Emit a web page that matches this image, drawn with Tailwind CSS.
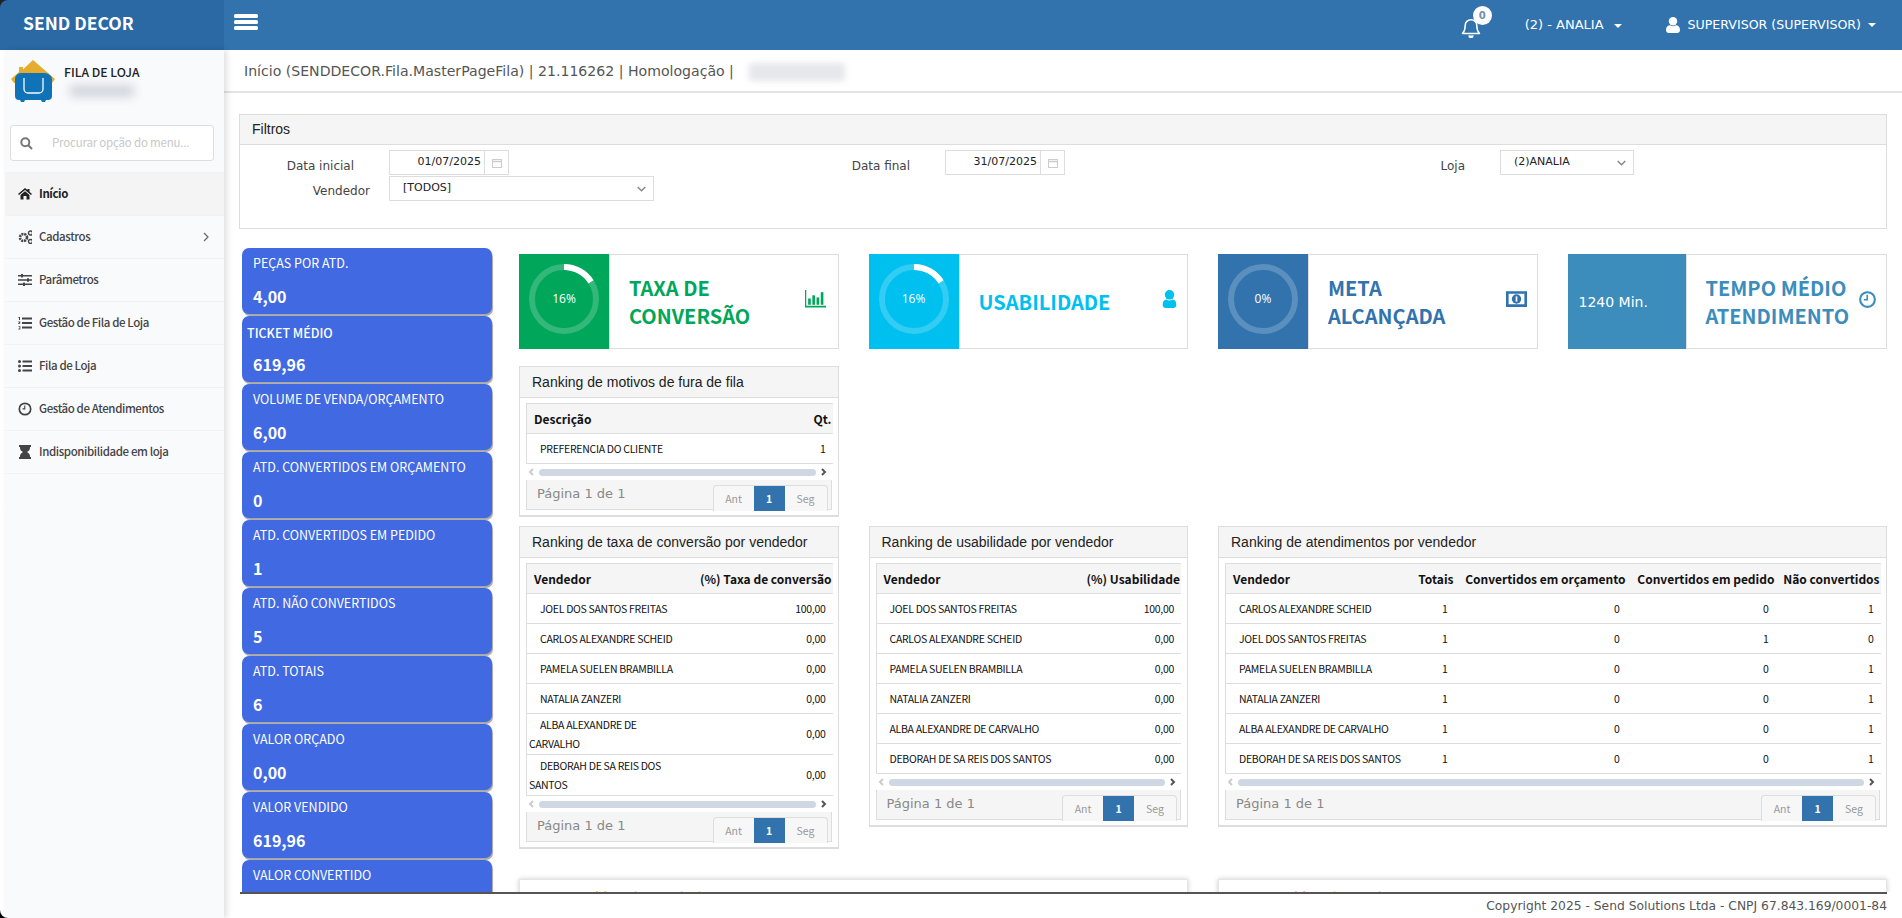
<!DOCTYPE html><html lang="pt-BR">
<head>
  <meta charset="UTF-8">
  <title>Send Decor - Fila de Loja</title>
  <script src="https://cdn.jsdelivr.net/npm/@tailwindcss/browser@4"></script>
</head>
<body class="bg-white h-screen overflow-hidden font-['Noto_Sans_CJK_SC',sans-serif]">

  <!-- barra superior -->
  <header class="h-[50px] bg-[#3273ae] flex items-center text-white relative">
    <div class="w-[224px] h-full bg-[#222] shrink-0">
      <div class="w-full h-full bg-[#2a69a4] flex items-center pl-[23px] pb-[4px] text-[17.5px] font-semibold rounded-tl-[8px]">SEND DECOR</div>
    </div>
    <svg class="ml-[10px] -mt-[6px] w-[24px] h-[16px]" viewBox="0 0 24 16" fill="white"><rect y="0" width="24" height="4" rx="1.5"/><rect y="6" width="24" height="4" rx="1.5"/><rect y="12" width="24" height="4" rx="1.5"/></svg>
    <div class="ml-auto flex items-center font-['DejaVu_Sans',sans-serif] text-[13px] relative h-full">
      <div class="relative w-[20px] h-[22px] mt-[3px]">
        <svg class="w-[20px] h-[22px]" viewBox="0 0 20 22" fill="none" stroke="white" stroke-width="1.5"><path d="M1.5 17.5c2-2 2.7-3.5 2.7-8 0-3.2 2.5-5.8 5.8-5.800s5.800 2.600 5.800 5.800c0 4.500.7 6 2.700 8z" stroke-linejoin="round"/><path d="M8 19.500a2 2 0 0 0 4 0" fill="white"/></svg>
        <span class="absolute -top-[10px] left-[12px] w-[19px] h-[19px] rounded-full bg-white text-[#6f8fb0] text-[10px] font-bold flex items-center justify-center">0</span>
      </div>
      <span class="ml-[44px]">(2) - ANALIA</span>
      <span class="ml-[10px] mt-[2px] border-x-[4px] border-x-transparent border-t-[4px] border-t-white"></span>
      <svg class="ml-[44px] w-[14px] h-[16px]" viewBox="0 0 14 16" fill="white"><circle cx="7" cy="4.200" r="4.200"/><path d="M0 13c0-3 1.800-4.800 4-4.800 1 .7 2 1 3 1s2-.3 3-1c2.200 0 4 1.800 4 4.800 0 1.800-1.300 3-3 3H3c-1.700 0-3-1.200-3-3z"/></svg>
      <span class="ml-[8px] text-[12.6px]">SUPERVISOR (SUPERVISOR)</span>
      <span class="ml-[7px] mr-[26px] border-x-[4px] border-x-transparent border-t-[4px] border-t-white"></span>
    </div>
  </header>

  <div class="flex h-[868px] relative">
    <!-- menu lateral -->
    <aside class="w-[224px] shrink-0 h-full pl-[5px] bg-linear-to-r from-white to-[#e4e4e4]">
      <div class="h-full bg-[#f9fafc] shadow-[3px_0_6px_rgba(0,0,0,0.12)] relative">
        <div class="h-[75px] flex items-start pl-[6px] pt-[10px]">
          <svg class="w-[44px] h-[44px] shrink-0" viewBox="0 0 44 44">
            <path d="M22 0 44 19l-3 4H3l-3-4 8-7V7h4v2.500z" fill="#e6ac2b"/>
            <path d="M10 13h24c3 0 7 3 7 6v17c0 3-2 4-4 4h-2l-1 2h-3l-1-2H14l-1 2h-3l-1-2H8c-2 0-4-1-4-4V19c0-3 3-6 6-6z" fill="#1173b7"/>
            <path d="M13 18v11a4 4 0 0 0 4 4h11a4 4 0 0 0 4-4V18" fill="none" stroke="#f9fafc" stroke-width="1.300"/>
          </svg>
          <div class="ml-[9px] pt-[3px]">
            <div class="text-[12.2px] leading-[18px] font-medium text-[#222]">FILA DE LOJA</div>
            <div class="mt-[4px] w-[64px] h-[12px] bg-gray-300 blur-[5px] ml-[6px]"></div>
          </div>
        </div>
        <div class="mx-[5px] w-[204px] h-[36px] border border-[#ddd] rounded-[3px] bg-white flex items-center pl-[9px]">
          <svg class="w-[13px] h-[13px] shrink-0" viewBox="0 0 13 13" fill="none" stroke="#777" stroke-width="2"><circle cx="5.300" cy="5.300" r="4"/><path d="M8.300 8.300 12 12"/></svg>
          <span class="ml-[19px] text-[11.5px] tracking-[-0.2px] whitespace-nowrap text-[#c8c8c8]">Procurar opção do menu...</span>
        </div>
        <nav id="menu" class="mt-[11px] border-t border-[#f1f2f4] text-[11.5px] tracking-[-0.4px] font-medium text-[#444]"></nav>
      </div>
    </aside>
    <div class="absolute left-0 bottom-0 w-[8px] h-[8px] bg-black"><div class="h-full bg-[#f9fafc] rounded-bl-[8px]"></div></div>

    <main class="flex-1 min-w-0 flex flex-col">
      <div class="h-[43px] shrink-0 border-b-2 border-[#e3e3e3] flex items-center pl-[20px] pt-[3px] font-['DejaVu_Sans',sans-serif] text-[14.1px] text-[#555]">
        Início (SENDDECOR.Fila.MasterPageFila) | 21.116262 | Homologação |
        <span class="ml-[15px] w-[96px] h-[18px] bg-gray-200 blur-[3px]"></span>
      </div>

      <div class="flex-1 min-h-0 overflow-hidden pt-[21px] pl-[15px] pr-[15px]">
        <!-- filtros -->
        <section class="h-[115px] border border-[#ddd]">
          <div class="h-[30px] bg-[#f5f5f5] border-b border-[#ddd] pl-[12px] flex items-center font-['Liberation_Sans',sans-serif] text-[14px] text-[#222]">Filtros</div>
          <div class="relative font-['DejaVu_Sans',sans-serif] text-[#444] text-[12px]">
            <div class="flex items-start pt-[5px]">
              <label class="w-[114px] text-right pt-[7px]">Data inicial</label>
              <div class="ml-[35px] w-[120px] h-[25px] border border-[#ddd] flex text-[11px] text-[#222]">
                <span class="flex-1 flex items-center justify-end pr-[3px]">01/07/2025</span>
                <span class="w-[24px] border-l border-[#ddd] flex items-center justify-center"><svg class="w-[10px] h-[10px]" viewBox="0 0 10 10" fill="none" stroke="#ccc"><rect x=".5" y="1.500" width="9" height="8"/><path d="M.5 3.500h9" stroke-width="1.500"/></svg></span>
              </div>
              <label class="w-[70px] ml-[331px] text-right pt-[7px]">Data final</label>
              <div class="ml-[35px] w-[120px] h-[25px] border border-[#ddd] flex text-[11px] text-[#222]">
                <span class="flex-1 flex items-center justify-end pr-[3px]">31/07/2025</span>
                <span class="w-[24px] border-l border-[#ddd] flex items-center justify-center"><svg class="w-[10px] h-[10px]" viewBox="0 0 10 10" fill="none" stroke="#ccc"><rect x=".5" y="1.500" width="9" height="8"/><path d="M.5 3.500h9" stroke-width="1.500"/></svg></span>
              </div>
              <label class="w-[30px] ml-[370px] text-right pt-[7px]">Loja</label>
              <div class="ml-[35px] w-[134px] h-[25px] border border-[#ddd] flex items-center pl-[13px] pr-[7px] justify-between text-[11px] text-[#222]">
                <span>(2)ANALIA</span>
                <svg class="w-[9px] h-[6px]" viewBox="0 0 9 6" fill="none" stroke="#888" stroke-width="1.500"><path d="M.7 1 4.500 4.800 8.300 1"/></svg>
              </div>
            </div>
            <div class="flex items-start mt-[1px]">
              <label class="w-[130px] text-right pt-[6px]">Vendedor</label>
              <div class="ml-[19px] w-[265px] h-[25px] border border-[#ddd] flex items-center pl-[13px] pr-[7px] justify-between text-[11px] text-[#222]">
                <span>[TODOS]</span>
                <svg class="w-[9px] h-[6px]" viewBox="0 0 9 6" fill="none" stroke="#888" stroke-width="1.500"><path d="M.7 1 4.500 4.800 8.300 1"/></svg>
              </div>
            </div>
          </div>
        </section>

        <div class="flex mt-[19px] pl-[3px]">
          <!-- indicadores -->
          <div id="stats" class="w-[250px] shrink-0 flex flex-col gap-[2px]"></div>

          <div class="ml-[27px] flex-1 min-w-0">
            <div id="kpis" class="grid grid-cols-4 gap-x-[30px] mt-[6px]"></div>
            <div class="grid grid-cols-4 gap-x-[30px] mt-[17px]"><div id="pMotivos"></div></div>
            <div class="grid grid-cols-4 gap-x-[30px] items-start mt-[9px]">
              <div id="pTaxa"></div>
              <div id="pUso"></div>
              <div id="pAtend" class="col-span-2"></div>
            </div>
            <div class="grid grid-cols-4 gap-x-[30px] mt-[30px]">
              <div class="col-span-2 h-[60px] border border-[#e5e5e5] shadow-[0_0_5px_rgba(0,0,0,0.2)] pl-[48px] pt-[7px] text-[15px] text-[#f39c12]">Ranking de vendedores</div>
              <div class="col-span-2 h-[60px] border border-[#e5e5e5] shadow-[0_0_5px_rgba(0,0,0,0.2)] pl-[48px] pt-[7px] text-[15px] text-[#f39c12]">Ranking de produtos</div>
            </div>
          </div>
        </div>
      </div>

      <footer class="h-[26px] shrink-0 mr-[15px] ml-[16px] border-t-2 border-[#555] bg-white flex items-center justify-end font-['DejaVu_Sans',sans-serif] text-[12.3px] text-[#555]">Copyright 2025 - Send Solutions Ltda - CNPJ 67.843.169/0001-84</footer>
    </main>
  </div>

  <script>
    const ICONS = {
      home: '<path d="M7 1 0 7l1 1 6-5 6 5 1-1-2.500-2.200V2h-2v1.100z"/><path d="M2.500 8 7 4.200 11.500 8v4.500h-3V9h-3v3.500h-3z"/>',
      cogs: '<circle cx="5.500" cy="7.500" r="3.500" fill="none" stroke="currentColor" stroke-width="2.600" stroke-dasharray="2 .8"/><circle cx="12.500" cy="3" r="2" fill="none" stroke="currentColor" stroke-width="1.400"/><circle cx="12.500" cy="11.500" r="2" fill="none" stroke="currentColor" stroke-width="1.400"/>',
      sliders: '<path d="M0 2h14v1.400H0zM0 6.300h14v1.400H0zM0 10.600h14V12H0z"/><rect x="3" y="1" width="2" height="3.400"/><rect x="9" y="5.300" width="2" height="3.400"/><rect x="5" y="9.600" width="2" height="3.400"/>',
      listol: '<path d="M4 1.500h10v2H4zM4 6h10v2H4zM4 10.500h10v2H4z"/><path d="M.5 1h1.500v3H1V2H.5zM.3 5.500h2v1l-1 1h1V8H.3V7l1-1h-1zM.3 10h2v3.500h-2V13h1.200v-.6h-1V12h1v-1.500H.3z"/>',
      listul: '<circle cx="1.500" cy="2.500" r="1.500"/><circle cx="1.500" cy="7" r="1.500"/><circle cx="1.500" cy="11.500" r="1.500"/><path d="M4.500 1.500H14v2H4.500zM4.500 6H14v2H4.500zM4.500 10.500H14v2H4.500z"/>',
      clock: '<circle cx="7" cy="7" r="5.700" fill="none" stroke="currentColor" stroke-width="1.700"/><path d="M7.300 3.500v4H4.500v-1.200h1.700V3.500z"/>',
      hourglass: '<path d="M1 0h12v2h-1v1c0 2-1.500 3-3 4 1.500 1 3 2 3 4v1h1v2H1v-2h1v-1c0-2 1.500-3 3-4-1.500-1-3-2-3-4V2H1z"/>'
    };

    const menuItems = [
      ['home', 'Início', true], ['cogs', 'Cadastros'], ['sliders', 'Parâmetros'], ['listol', 'Gestão de Fila de Loja'],
      ['listul', 'Fila de Loja'], ['clock', 'Gestão de Atendimentos'], ['hourglass', 'Indisponibilidade em loja']
    ];
    document.getElementById('menu').innerHTML = menuItems.map(([icon, label, active]) => `
      <div class="h-[43px] border-b border-[#f1f2f4] flex items-center pl-[13px] pr-[15px] ${active ? 'bg-[#f4f4f5] text-[#222] font-semibold' : ''}">
        <svg class="w-[14px] h-[14px] shrink-0" viewBox="0 0 14 14" fill="currentColor">${ICONS[icon]}</svg>
        <span class="ml-[7px] flex-1">${label}</span>
        ${label === 'Cadastros' ? '<svg class="w-[6px] h-[10px]" viewBox="0 0 6 10" fill="none" stroke="#666" stroke-width="1.200"><path d="M1 1l4 4-4 4"/></svg>' : ''}
      </div>`).join('');

    const stats = [
      ['PEÇAS POR ATD.', '4,00'], ['TICKET MÉDIO', '619,96'], ['VOLUME DE VENDA/ORÇAMENTO', '6,00'],
      ['ATD. CONVERTIDOS EM ORÇAMENTO', '0'], ['ATD. CONVERTIDOS EM PEDIDO', '1'], ['ATD. NÃO CONVERTIDOS', '5'],
      ['ATD. TOTAIS', '6'], ['VALOR ORÇADO', '0,00'], ['VALOR VENDIDO', '619,96'], ['VALOR CONVERTIDO', '0,00']
    ];
    document.getElementById('stats').innerHTML = stats.map(([label, value], i) => `
      <div class="h-[66px] shrink-0 rounded-[7px] bg-[#4169e1] shadow-[1px_2px_1px_rgba(0,0,0,0.35)] text-white ${i === 1 ? 'pl-[5px] pt-[7px]' : 'pl-[11px] pt-[5px]'}">
        <div class="text-[12.5px] leading-[20px] ${i === 1 ? 'font-medium' : ''}">${label}</div>
        <div class="${i === 1 ? 'pl-[6px] mt-[9px]' : 'mt-[11px]'} text-[16px] leading-[24px] font-bold">${value}</div>
      </div>`).join('');

    function ring(pct) {
      const c = 2 * Math.PI * 32;
      return `<div class="relative w-[90px] h-full flex items-center justify-center">
        <svg class="absolute left-[10px] top-[10px] w-[70px] h-[70px] -rotate-90" viewBox="0 0 70 70" fill="none" stroke-width="6">
          <circle cx="35" cy="35" r="32" stroke="rgba(255,255,255,0.2)"/>
          <circle cx="35" cy="35" r="32" stroke="white" stroke-dasharray="${c * pct / 100} ${c}"/>
        </svg>
        <span class="text-[12px] font-['Open_Sans',sans-serif] -mt-[5px]">${pct}%</span>
      </div>`;
    }

    const kpis = [
      { color: 'text-[#00a65a]', bg: 'bg-[#00a65a]', nudge: 'mr-[2px]', title: 'TAXA DE<br>CONVERSÃO', box: ring(16), icon: '<path d="M0 0h1.200v15H20v1.500H0z"/><rect x="3" y="8" width="2.500" height="6"/><rect x="7" y="5" width="2.500" height="9"/><rect x="11" y="7" width="2.500" height="7"/><rect x="15" y="2" width="2.500" height="12"/>' },
      { color: 'text-[#00c0ef]', bg: 'bg-[#00c0ef]', nudge: '-mr-[3px]', title: 'USABILIDADE', box: ring(16), icon: '<circle cx="10" cy="4.500" r="4.500"/><path d="M3.500 14c0-3 1.500-5 3.500-5 1 .7 2 1 3 1s2-.3 3-1c2 0 3.500 2 3.500 5 0 2-1 3-3 3H6.500c-2 0-3-1-3-3z"/>' },
      { color: 'text-[#3273ae]', bg: 'bg-[#3273ae]', nudge: '', title: 'META<br>ALCANÇADA', box: ring(0), icon: '<path fill-rule="evenodd" d="M0 1h20v15H0zM2.500 3.500v10h15v-10z"/><circle cx="10" cy="8.500" r="4.500"/><path d="M9.200 6h1.600v5H9.200z" fill="white"/>' },
      { color: 'text-[#3c8dbc]', bg: 'bg-[#3c8dbc]', nudge: '-mr-[2px]', title: 'TEMPO MÉDIO<br>ATENDIMENTO', box: '<div class="w-[118px] h-full flex items-center pl-[11px] pt-[2px] font-[\'DejaVu_Sans\',sans-serif] text-[14px]">1240 Min.</div>', icon: '<circle cx="10" cy="9" r="7" fill="none" stroke="currentColor" stroke-width="2"/><path d="M10.500 4.500v5.500H6.500V8.500h2.500v-4z"/>' }
    ];
    document.getElementById('kpis').innerHTML = kpis.map(k => `
      <div class="h-[95px] border border-[#ddd] flex">
        <div class="${k.bg} text-white -ml-px -my-px h-[95px] shrink-0">${k.box}</div>
        <div class="flex-1 min-w-0 border-l border-[#ddd] flex items-center pl-[19px] pr-[10px]">
          <div class="${k.color} flex-1 text-[20px] leading-[28px] font-semibold">${k.title}</div>
          <svg class="${k.color} ${k.nudge} w-[21px] h-[18px] -mt-[6px] shrink-0" viewBox="0 0 20 17" fill="currentColor">${k.icon}</svg>
        </div>
      </div>`).join('');

    const chevL = '<svg class="w-[6px] h-[8px]" viewBox="0 0 6 8" fill="none" stroke="#ccc" stroke-width="2"><path d="M5 1 2 4l3 3"/></svg>';
    const chevR = '<svg class="w-[6px] h-[8px]" viewBox="0 0 6 8" fill="none" stroke="#555" stroke-width="2"><path d="M1 1l3 3-3 3"/></svg>';

    function panel({ title, cols, rows }) {
      const head = cols.map((c, i) => `<th class="${i === 0 ? 'text-left pl-[7px]' : 'text-right pr-[1px]'} font-bold whitespace-nowrap" style="width:${c.w}px">${c.t}</th>`).join('');
      const body = rows.map(r => `<tr class="border-b border-[#ddd]">${r.map((v, i) => i === 0
        ? `<td class="pl-[2px] indent-[11px] h-[30px] leading-[19px] py-[1px]">${v}</td>`
        : `<td class="text-right pr-[7px]">${v}</td>`).join('')}</tr>`).join('');
      return `<div class="border border-[#ddd] border-b-[2px] bg-white">
        <div class="h-[31px] bg-[#f5f5f5] border-b border-[#ddd] flex items-center pl-[12px] font-['Liberation_Sans',sans-serif] text-[14px] text-[#222]">${title}</div>
        <div class="px-[6px] pt-[5px] pb-[5px]">
          <table class="w-full table-fixed border-l border-t border-collapse border-[#ddd] text-[10.5px] tracking-[-0.3px] text-[#111]">
            <thead><tr class="h-[30px] bg-[#f5f5f5] border-b border-[#ddd] text-[12px] tracking-normal">${head}</tr></thead>
            <tbody>${body}</tbody>
          </table>
          <div class="h-[16px] flex items-center pl-[2px] pr-[5px] gap-[5px]">
            ${chevL}<div class="flex-1 h-[7px] rounded-full bg-[#cfd8e2]"></div>${chevR}
          </div>
          <div class="h-[30px] bg-[#f5f5f5] border border-t-0 border-[#ddd] flex justify-between pl-[10px] pr-[3px] font-['DejaVu_Sans',sans-serif] text-[13px] text-[#888]">
            <span class="leading-[28px]">Página 1 de 1</span>
            <div class="mt-[5px] h-[26px] flex border border-b-0 border-[#ddd] rounded-t-[4px] text-[10.5px] text-[#999] bg-[#f7f7f7] font-['Noto_Sans_CJK_SC',sans-serif]">
              <span class="w-[40px] flex items-center justify-center">Ant</span>
              <span class="w-[31px] flex items-center justify-center bg-[#3273ae] text-white font-bold">1</span>
              <span class="w-[42px] flex items-center justify-center">Seg</span>
            </div>
          </div>
        </div>
      </div>`;
    }

    const joel = 'JOEL DOS SANTOS FREITAS', carlos = 'CARLOS ALEXANDRE SCHEID', pamela = 'PAMELA SUELEN BRAMBILLA',
      natalia = 'NATALIA ZANZERI', alba = 'ALBA ALEXANDRE DE CARVALHO', deborah = 'DEBORAH DE SA REIS DOS SANTOS';

    document.getElementById('pMotivos').innerHTML = panel({
      title: 'Ranking de motivos de fura de fila',
      cols: [{ t: 'Descrição', w: 270 }, { t: 'Qt.', w: 36 }],
      rows: [['PREFERENCIA DO CLIENTE', '1']]
    });
    document.getElementById('pTaxa').innerHTML = panel({
      title: 'Ranking de taxa de conversão por vendedor',
      cols: [{ t: 'Vendedor', w: 148 }, { t: '(%) Taxa de conversão', w: 158 }],
      rows: [[joel, '100,00'], [carlos, '0,00'], [pamela, '0,00'], [natalia, '0,00'], [alba, '0,00'], [deborah, '0,00']]
    });
    document.getElementById('pUso').innerHTML = panel({
      title: 'Ranking de usabilidade por vendedor',
      cols: [{ t: 'Vendedor', w: 205 }, { t: '(%) Usabilidade', w: 100 }],
      rows: [[joel, '100,00'], [carlos, '0,00'], [pamela, '0,00'], [natalia, '0,00'], [alba, '0,00'], [deborah, '0,00']]
    });
    document.getElementById('pAtend').innerHTML = panel({
      title: 'Ranking de atendimentos por vendedor',
      cols: [{ t: 'Vendedor', w: 182 }, { t: 'Totais', w: 47 }, { t: 'Convertidos em orçamento', w: 172 }, { t: 'Convertidos em pedido', w: 149 }, { t: 'Não convertidos', w: 105 }],
      rows: [[carlos, 1, 0, 0, 1], [joel, 1, 0, 1, 0], [pamela, 1, 0, 0, 1], [natalia, 1, 0, 0, 1], [alba, 1, 0, 0, 1], [deborah, 1, 0, 0, 1]]
    });
  </script>
</body>
</html>
